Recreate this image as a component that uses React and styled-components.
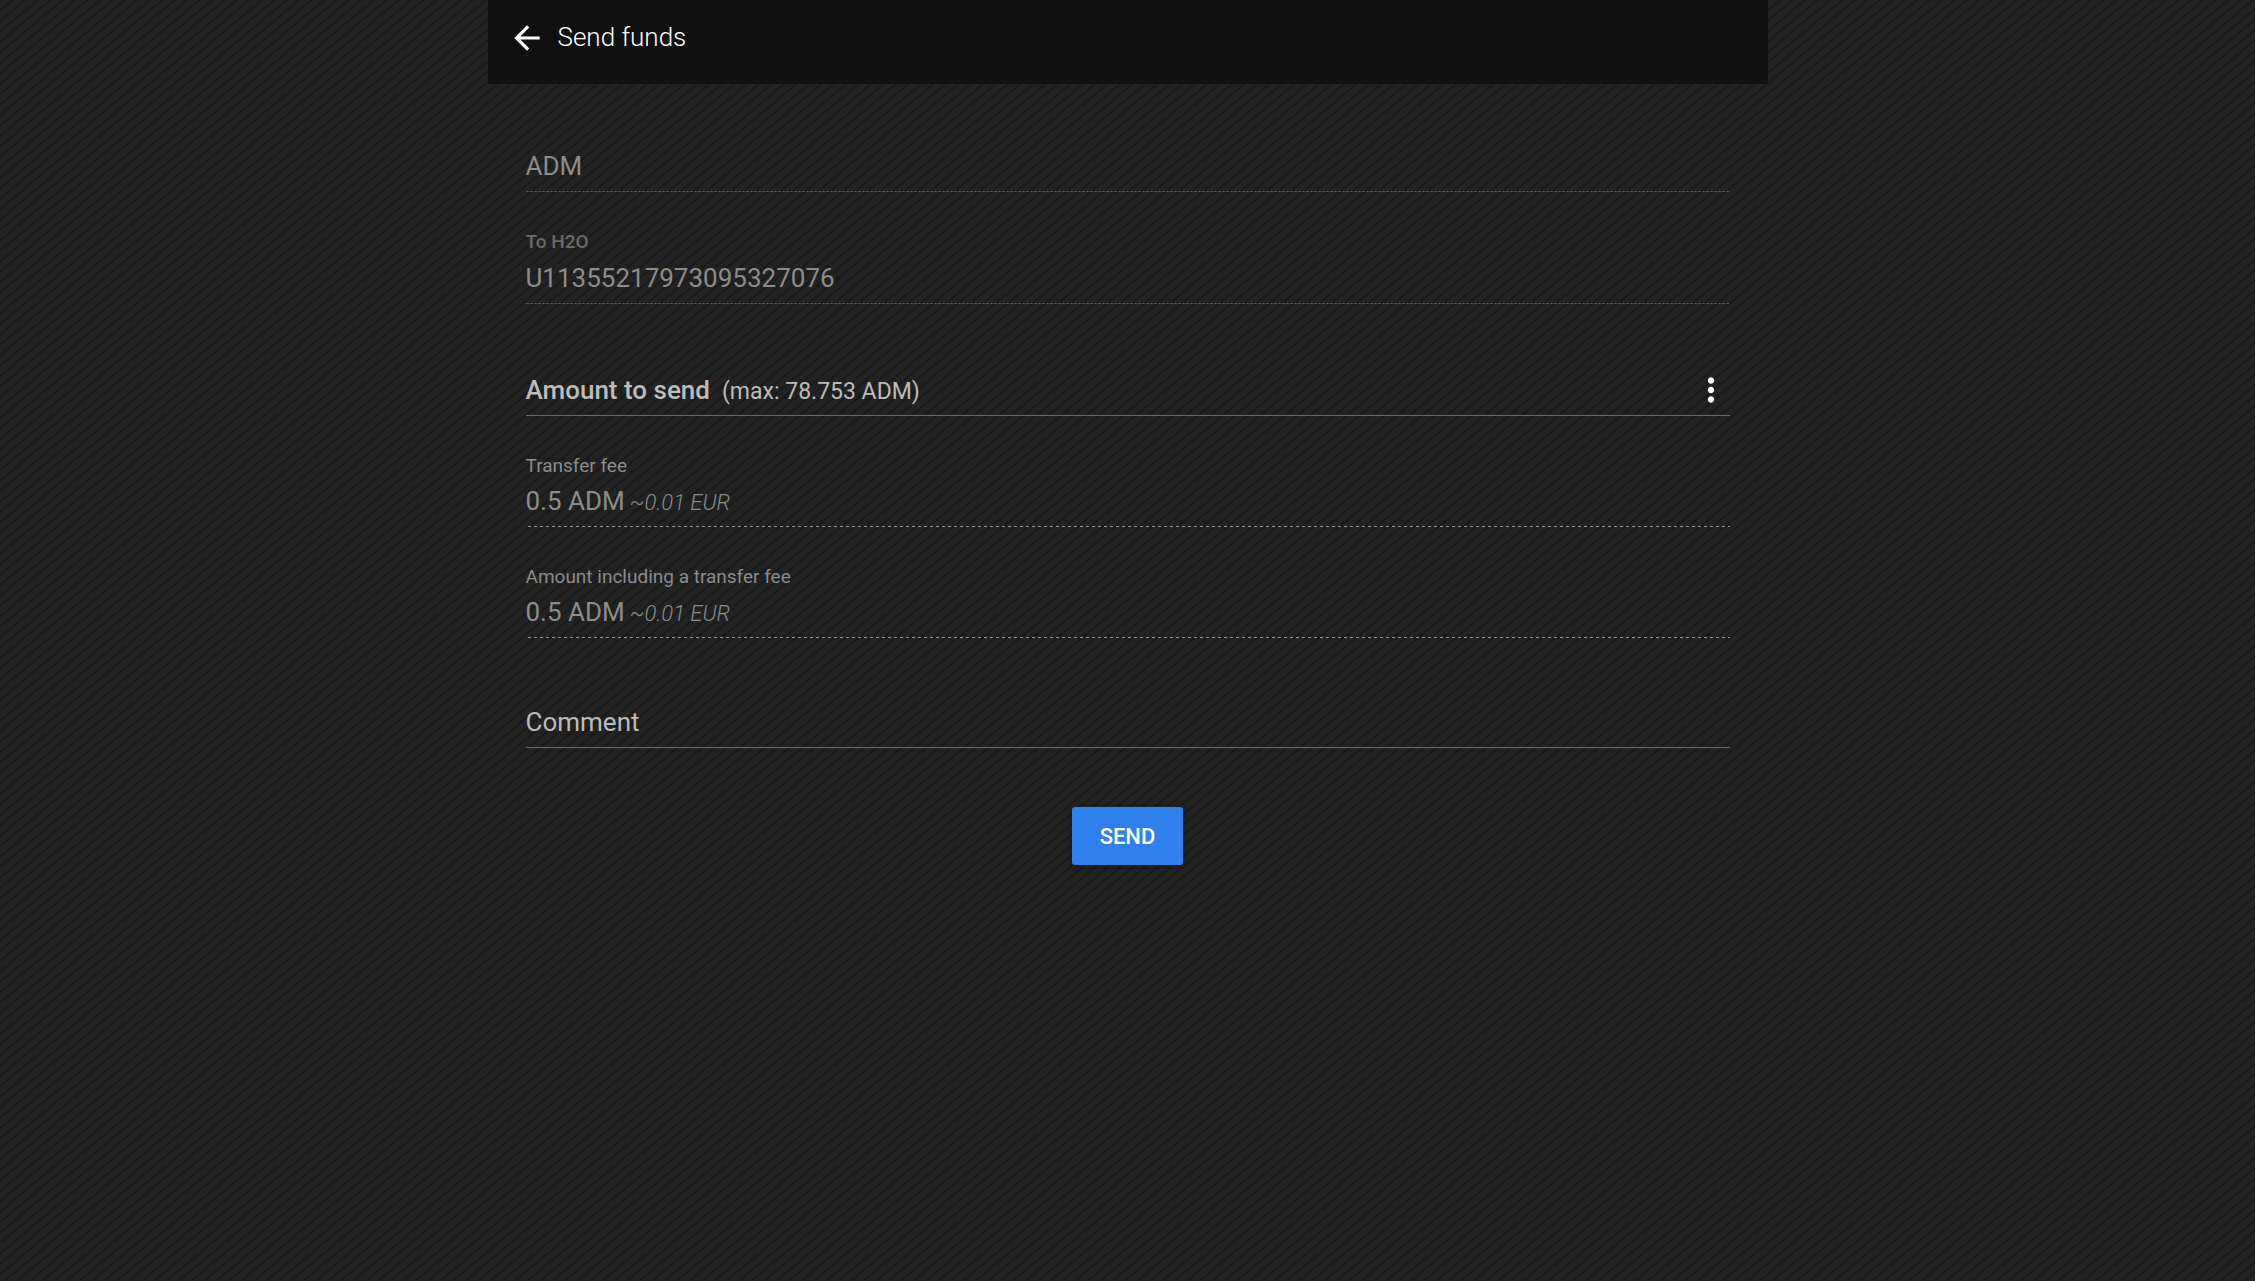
import React from 'react';
import styled, { createGlobalStyle } from 'styled-components';

const GlobalStyle = createGlobalStyle`
  *, *::before, *::after { box-sizing: border-box; }
  body {
    margin: 0;
    min-height: 100vh;
    color: #fff;
    font-family: Roboto, "Liberation Sans", sans-serif;
    background-color: #222;
    background-image: repeating-linear-gradient(
      -40deg,
      #222 0, #222 5px,
      #1a1a1a 6px, #1a1a1a 7px,
      #222 8px
    );
  }
  button, input, select { font-family: inherit; }
`;

const Page = styled.main`
  max-width: 1280px;
  margin: 0 auto;
`;

const Toolbar = styled.header`
  display: flex;
  align-items: flex-start;
  gap: 12px;
  height: 84px;
  padding: 19px 20px;
  background: #101010;
`;

const IconButton = styled.button`
  display: flex;
  padding: 0;
  border: 0;
  background: none;
  color: #fff;
  cursor: pointer;
`;

const Icon = styled.svg`
  display: block;
  width: 38px;
  height: 38px;
  fill: currentColor;
`;

const Title = styled.h1`
  margin: 0;
  font-size: 26px;
  line-height: 36px;
  font-weight: 300;
`;

const Form = styled.form`
  display: flex;
  flex-direction: column;
  padding: 0 38px;
`;

const Field = styled.div`
  display: flex;
  flex-direction: column;
  margin-top: ${(p) => p.$top}px;
`;

const Label = styled.label`
  margin-bottom: ${(p) => (p.$strong ? 8 : 7)}px;
  font-size: 19px;
  line-height: 24px;
  font-weight: ${(p) => (p.$strong ? 500 : 400)};
  color: ${(p) => (p.$strong ? '#6b6b6b' : '#8c8c8c')};
`;

const lines = {
  solid: 'linear-gradient(#686868, #686868)',
  dotted: 'repeating-linear-gradient(to right, #565656 0 3px, transparent 3px 4px)',
  dashed: 'repeating-linear-gradient(to right, transparent 0 2px, #979797 2px 5px, transparent 5px 6px)',
};

const Row = styled.div`
  display: flex;
  align-items: baseline;
  height: 42px;
  padding-bottom: 10px;
  font-size: 26px;
  line-height: 32px;
  color: #8c8c8c;
  background: ${(p) => lines[p.$line]} left bottom / 100% 1px no-repeat;
`;

const Input = styled.input`
  flex: 1;
  min-width: 0;
  height: 32px;
  padding: 0;
  border: 0;
  outline: 0;
  background: none;
  color: ${(p) => (p.disabled ? '#8c8c8c' : '#fff')};
  font-size: 26px;
  line-height: 32px;
`;

const Select = styled.select`
  flex: 1;
  height: 32px;
  padding: 0;
  border: 0;
  appearance: none;
  background: none;
  color: #8c8c8c;
  opacity: 1;
  font-size: 26px;
  line-height: 32px;
`;

const InlineLabel = styled.label`
  margin-right: 12px;
  color: #bcbcbc;
  font-weight: ${(p) => (p.$strong ? 500 : 400)};
`;

const Limit = styled.span`
  margin-left: 12px;
  font-size: 23px;
  font-weight: 400;
`;

const Rate = styled.em`
  margin-left: 5px;
  font-size: 22px;
  font-weight: 300;
`;

const MenuButton = styled(IconButton)`
  align-self: center;
`;

const SendButton = styled.button`
  align-self: center;
  height: 58px;
  margin-top: 59px;
  padding: 0 28px;
  border: 0;
  border-radius: 3px;
  background: #2f80ed;
  color: #fff;
  font-size: 22px;
  font-weight: 500;
  text-transform: uppercase;
  box-shadow: 0 2px 4px rgba(0, 0, 0, 0.3);
  cursor: pointer;
`;

function Fee({ id, label }) {
  return (
    <Field $top={38}>
      <Label htmlFor={id}>{label}</Label>
      <Row as="output" id={id} $line="dashed">
        0.5 ADM<Rate>~0.01 EUR</Rate>
      </Row>
    </Field>
  );
}

export default function App() {
  return (
    <>
      <GlobalStyle />
      <Page>
        <Toolbar>
          <IconButton type="button" aria-label="Back">
            <Icon viewBox="0 0 24 24">
              <path d="M20 11H7.83l5.59-5.59L12 4l-8 8 8 8 1.41-1.41L7.83 13H20v-2z" />
            </Icon>
          </IconButton>
          <Title>Send funds</Title>
        </Toolbar>
        <Form onSubmit={(e) => e.preventDefault()}>
          <Field $top={66}>
            <Row $line="dotted">
              <Select aria-label="Currency" disabled defaultValue="ADM">
                <option>ADM</option>
              </Select>
            </Row>
          </Field>
          <Field $top={38}>
            <Label htmlFor="recipient" $strong>To H2O</Label>
            <Row $line="dotted">
              <Input id="recipient" disabled defaultValue="U11355217973095327076" />
            </Row>
          </Field>
          <Field $top={70}>
            <Row $line="solid">
              <InlineLabel htmlFor="amount" $strong>
                Amount to send<Limit>(max: 78.753 ADM)</Limit>
              </InlineLabel>
              <Input id="amount" inputMode="decimal" />
              <MenuButton type="button" aria-label="Amount options">
                <Icon viewBox="0 0 24 24">
                  <path d="M12 8c1.1 0 2-.9 2-2s-.9-2-2-2-2 .9-2 2 .9 2 2 2zm0 2c-1.1 0-2 .9-2 2s.9 2 2 2 2-.9 2-2-.9-2-2-2zm0 6c-1.1 0-2 .9-2 2s.9 2 2 2 2-.9 2-2-.9-2-2-2z" />
                </Icon>
              </MenuButton>
            </Row>
          </Field>
          <Fee id="fee" label="Transfer fee" />
          <Fee id="total" label="Amount including a transfer fee" />
          <Field $top={68}>
            <Row $line="solid">
              <InlineLabel htmlFor="comment">Comment</InlineLabel>
              <Input id="comment" />
            </Row>
          </Field>
          <SendButton type="submit">Send</SendButton>
        </Form>
      </Page>
    </>
  );
}
